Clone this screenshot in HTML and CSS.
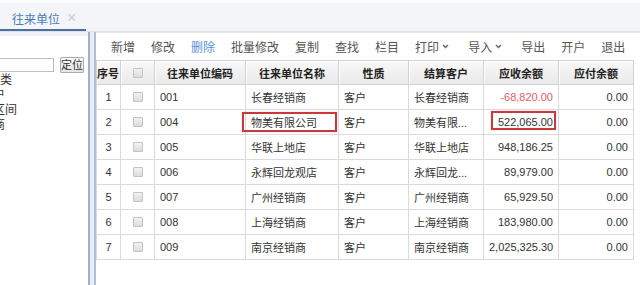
FILE: index.html
```html
<html>
    <head>
        <link rel="stylesheet" href="styles.css">
    </head>
    <body>
        <div class="tabbar">
            <div class="tab">往来单位<span class="tab-close">×</span></div>
        </div>

        <div class="main">
            <aside class="side">
                <div class="search">
                    <input type="text" class="search-input" />
                    <button class="search-btn">定位</button>
                </div>
                <ul class="tree">
                    <li class="lv0">往来单位分类</li>
                    <li class="lv1">所有客户</li>
                    <li class="lv2">零售区间</li>
                    <li class="lv2">经销商</li>
                </ul>
            </aside>

            <div class="splitter"></div>

            <section class="content">
                <div class="toolbar">
                    <span class="tool">新增</span>
                    <span class="tool">修改</span>
                    <span class="tool tool--active">删除</span>
                    <span class="tool">批量修改</span>
                    <span class="tool">复制</span>
                    <span class="tool">查找</span>
                    <span class="tool">栏目</span>
                    <span class="tool tool--menu">打印<svg width="7" height="5" viewBox="0 0 7 5"><path d="M1 1l2.5 2.5L6 1" fill="none" stroke="#666" stroke-width="1.4"/></svg></span>
                    <span class="tool tool--menu">导入<svg width="7" height="5" viewBox="0 0 7 5"><path d="M1 1l2.5 2.5L6 1" fill="none" stroke="#666" stroke-width="1.4"/></svg></span>
                    <span class="tool">导出</span>
                    <span class="tool">开户</span>
                    <span class="tool">退出</span>
                </div>

                <table class="grid">
                    <colgroup>
                        <col style="width: 24px">
                        <col style="width: 34px">
                        <col style="width: 91px">
                        <col style="width: 93px">
                        <col style="width: 70px">
                        <col style="width: 75px">
                        <col style="width: 75px">
                        <col style="width: 75px">
                    </colgroup>
                    <thead>
                        <tr>
                            <th>序号</th>
                            <th><span class="check"></span></th>
                            <th>往来单位编码</th>
                            <th>往来单位名称</th>
                            <th>性质</th>
                            <th>结算客户</th>
                            <th>应收余额</th>
                            <th>应付余额</th>
                        </tr>
                    </thead>
                    <tbody>
                        <tr>
                            <td class="c">1</td>
                            <td class="c"><span class="check"></span></td>
                            <td>001</td>
                            <td>长春经销商</td>
                            <td>客户</td>
                            <td>长春经销商</td>
                            <td class="num neg">-68,820.00</td>
                            <td class="num">0.00</td>
                        </tr>
                        <tr>
                            <td class="c">2</td>
                            <td class="c"><span class="check"></span></td>
                            <td>004</td>
                            <td class="mark mark--name">物美有限公司</td>
                            <td>客户</td>
                            <td>物美有限...</td>
                            <td class="num mark mark--num">522,065.00</td>
                            <td class="num">0.00</td>
                        </tr>
                        <tr>
                            <td class="c">3</td>
                            <td class="c"><span class="check"></span></td>
                            <td>005</td>
                            <td>华联上地店</td>
                            <td>客户</td>
                            <td>华联上地店</td>
                            <td class="num">948,186.25</td>
                            <td class="num">0.00</td>
                        </tr>
                        <tr>
                            <td class="c">4</td>
                            <td class="c"><span class="check"></span></td>
                            <td>006</td>
                            <td>永辉回龙观店</td>
                            <td>客户</td>
                            <td>永辉回龙...</td>
                            <td class="num">89,979.00</td>
                            <td class="num">0.00</td>
                        </tr>
                        <tr>
                            <td class="c">5</td>
                            <td class="c"><span class="check"></span></td>
                            <td>007</td>
                            <td>广州经销商</td>
                            <td>客户</td>
                            <td>广州经销商</td>
                            <td class="num">65,929.50</td>
                            <td class="num">0.00</td>
                        </tr>
                        <tr>
                            <td class="c">6</td>
                            <td class="c"><span class="check"></span></td>
                            <td>008</td>
                            <td>上海经销商</td>
                            <td>客户</td>
                            <td>上海经销商</td>
                            <td class="num">183,980.00</td>
                            <td class="num">0.00</td>
                        </tr>
                        <tr>
                            <td class="c">7</td>
                            <td class="c"><span class="check"></span></td>
                            <td>009</td>
                            <td>南京经销商</td>
                            <td>客户</td>
                            <td>南京经销商</td>
                            <td class="num">2,025,325.30</td>
                            <td class="num">0.00</td>
                        </tr>
                    </tbody>
                </table>
            </section>
        </div>
    </body>
</html>
```

FILE: styles.css
```css
* {
    box-sizing: border-box;
}

html,
body {
    height: 100%;
}

body {
    margin: 0;
    display: flex;
    flex-direction: column;
    overflow: hidden;
    background-color: #fff;
    color: #333;
    font-family: "Liberation Sans", "Noto Sans CJK SC", sans-serif;
    font-size: 12px;
}

/* tab strip */

.tabbar {
    height: 32px;
    flex-shrink: 0;
    display: flex;
    align-items: flex-end;
    background-color: #f3f5f8;
    border-top: 3px solid #fbfcfd;
    border-bottom: 1px solid #dde2e9;
}

.tab {
    width: 86px;
    height: 28px;
    padding: 4px 0 0 12px;
    display: flex;
    align-items: center;
    color: #4a7cb8;
    font-size: 12px;
    border-bottom: 2px solid #4d6f9e;
}

.tab-close {
    margin-left: 7px;
    color: #c9cdd3;
    font-size: 16px;
    line-height: 1;
}

.main {
    flex: 1;
    display: flex;
    min-height: 0;
}

/* left tree panel */

.side {
    width: 88px;
    flex-shrink: 0;
    overflow: hidden;
    padding-top: 21px;
    border-top: 4px solid #eef1f5;
}

.search {
    display: flex;
    align-items: center;
    gap: 6px;
    height: 16px;
}

.search-input {
    width: 56px;
    height: 14px;
    margin: 0 0 0 -2px;
    border: 1px solid #b9bec6;
    background: #fff;
    padding: 0;
}

.search-btn {
    width: 24px;
    height: 16px;
    padding: 0;
    font-family: inherit;
    font-size: 11px;
    line-height: 14px;
    color: #333;
    background: linear-gradient(#fafafa, #e4e4e4);
    border: 1px solid #a9adb3;
    border-radius: 1px;
}

.tree {
    list-style: none;
    margin: 0 0 0 -60px;
    padding: 0;
    white-space: nowrap;
    line-height: 15px;
}

.lv1 {
    padding-left: 17px;
}

.lv2 {
    padding-left: 29px;
}

.splitter {
    width: 8px;
    flex-shrink: 0;
    background-color: #e9edf3;
    border-left: 2px solid #a6b2c4;
    border-right: 2px solid #aebfd8;
}

/* right content */

.content {
    flex: 1;
    min-width: 0;
    display: flex;
    flex-direction: column;
    border-top: 1px solid #e3e7ec;
}

.toolbar {
    height: 27px;
    flex-shrink: 0;
    display: flex;
    align-items: center;
    gap: 16px;
    padding: 0 0 0 15px;
    color: #555;
    font-size: 12px;
}

.tool {
    display: flex;
    align-items: center;
    white-space: nowrap;
}

.tool--active {
    color: #5a8fd8;
}

.tool--menu {
    margin-right: 3px;
}

.tool--menu svg {
    margin-left: 3px;
}

/* grid */

.grid {
    table-layout: fixed;
    width: 537px;
    border-collapse: collapse;
    font-size: 11px;
}

.grid th {
    height: 24px;
    padding: 0;
    font-weight: bold;
    color: #222;
    background: linear-gradient(#f8f8f8, #e9e9e9);
    border: 1px solid #d2d2d2;
    box-shadow: inset 1px 1px 0 #fff;
    white-space: nowrap;
}

.grid th:first-child {
    text-align: left;
}

.grid td {
    height: 25px;
    padding: 0 5px;
    border: 1px solid #dadada;
    white-space: nowrap;
    overflow: hidden;
    color: #333;
}

.grid td.c {
    padding: 0;
    text-align: center;
}

.grid td.num {
    text-align: right;
}

.grid td.neg {
    color: #d9606b;
}

.check {
    display: inline-block;
    width: 10px;
    height: 10px;
    vertical-align: middle;
    border: 1px solid #c3c3c3;
    border-radius: 1px;
    background: linear-gradient(#f2f2f2, #dcdcdc);
}

/* red annotation boxes over the cells */

.mark {
    position: relative;
    overflow: visible !important;
}

.mark::after {
    content: "";
    position: absolute;
    border: 2px solid #c8393e;
    box-shadow: 0 0 1px rgba(200, 57, 62, 0.4);
}

.mark--name::after {
    left: -4px;
    right: 1px;
    top: 2px;
    bottom: 2px;
}

.mark--num::after {
    left: 7px;
    right: 2px;
    top: 1px;
    bottom: 4px;
}
```
